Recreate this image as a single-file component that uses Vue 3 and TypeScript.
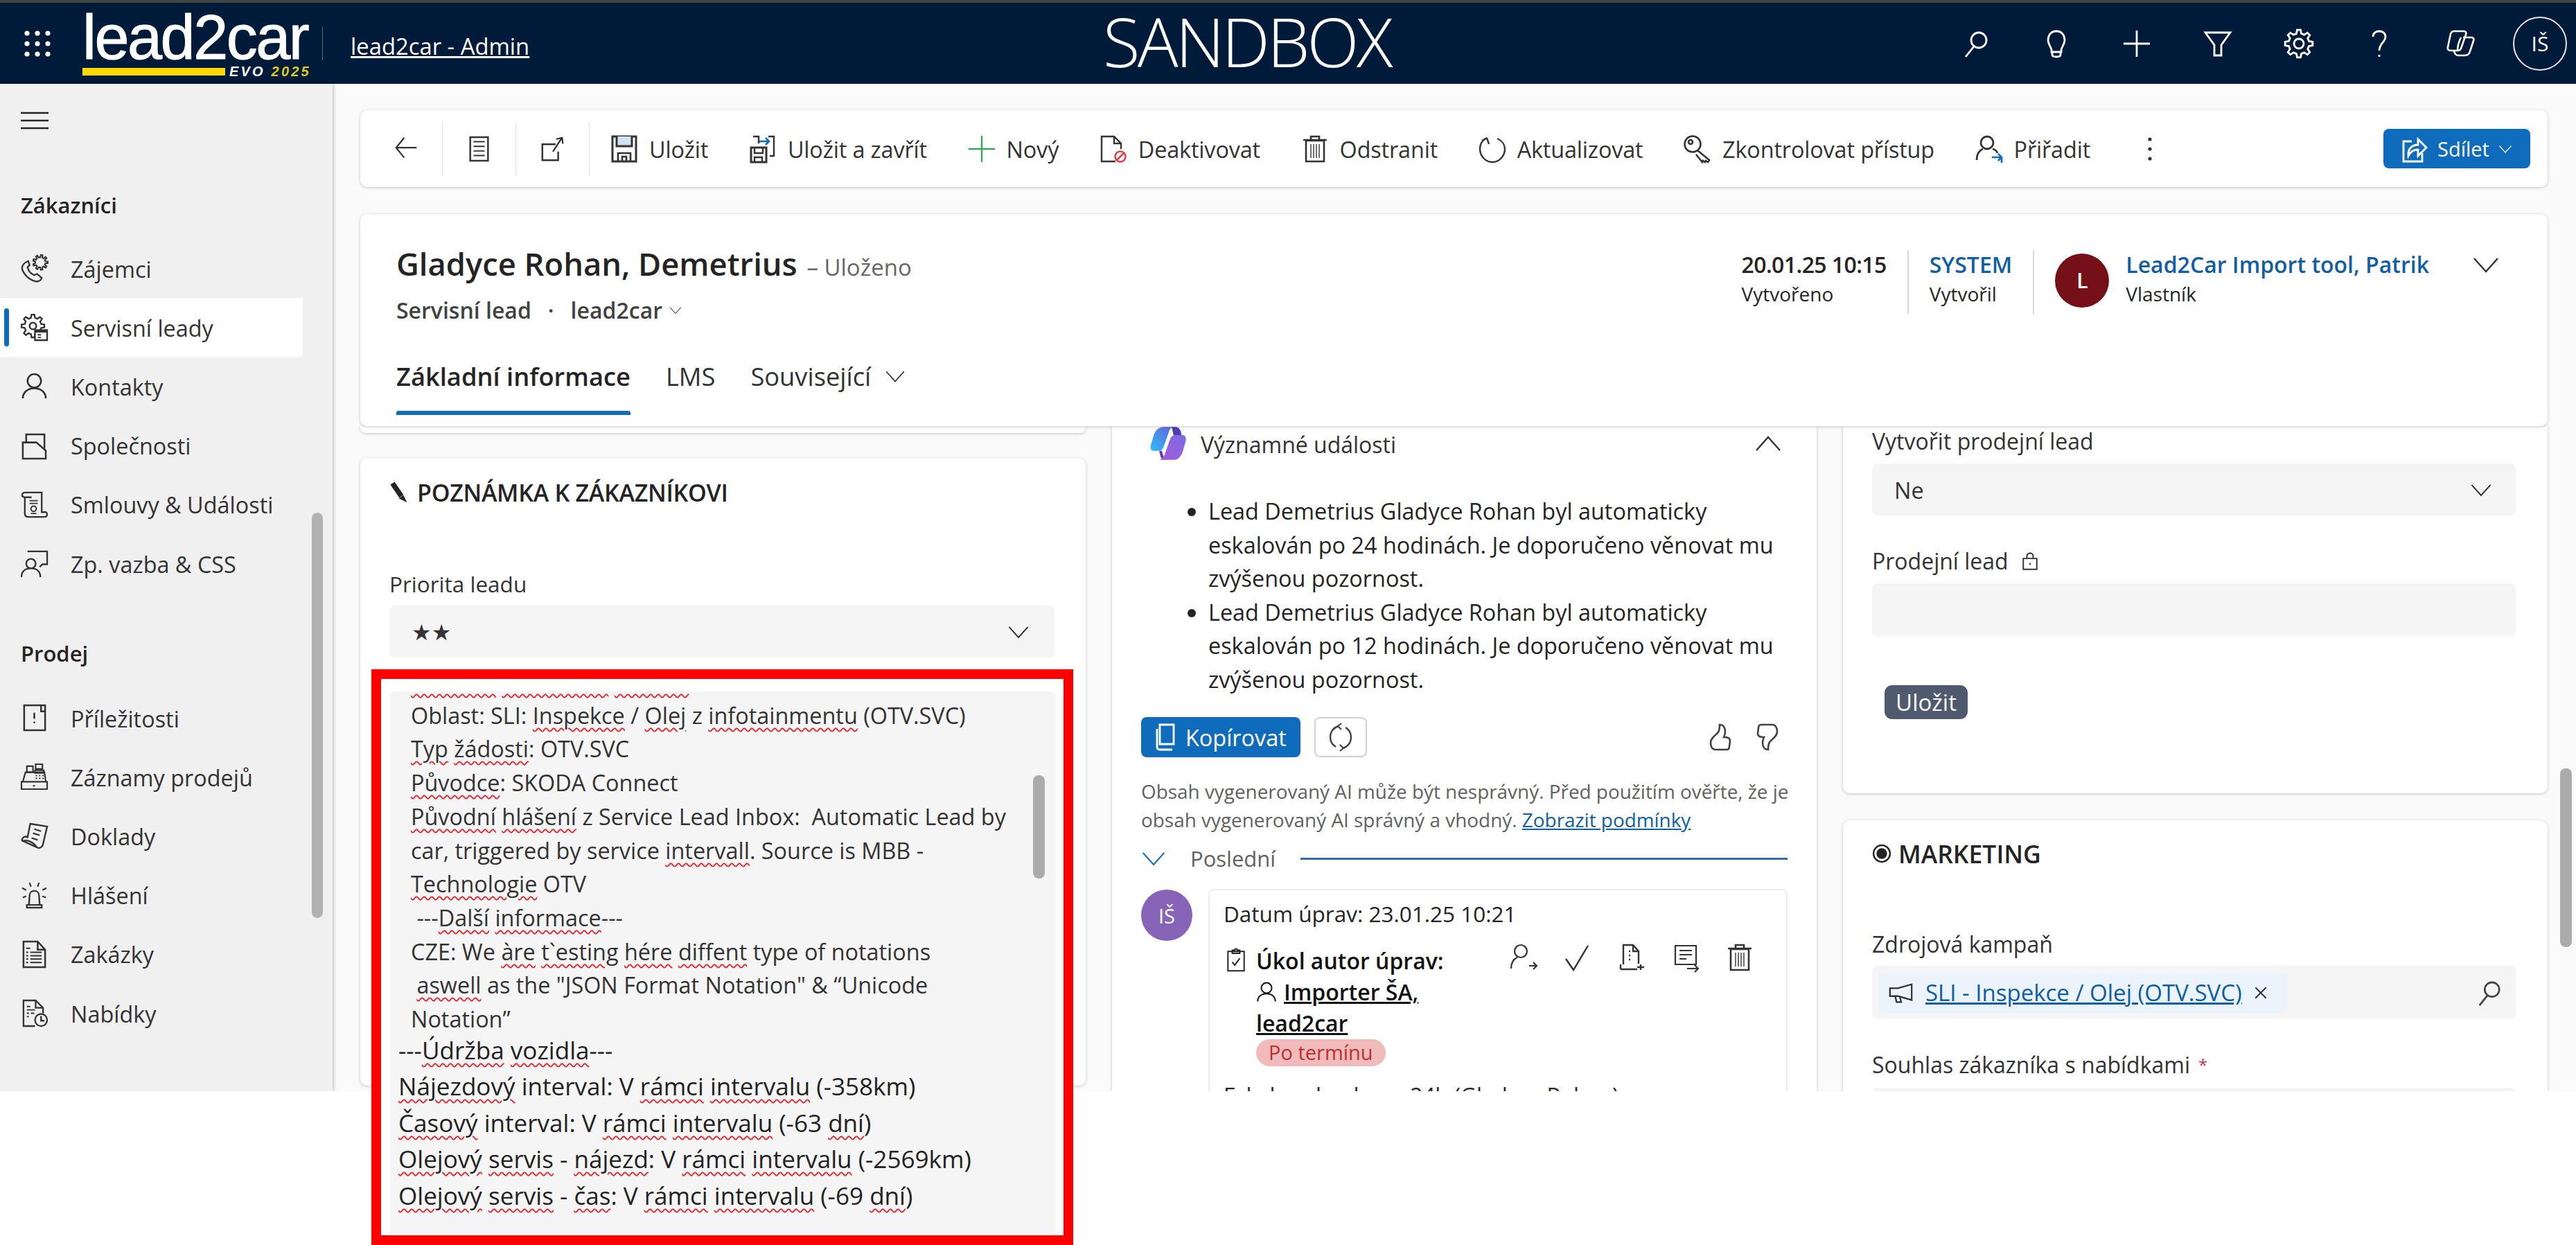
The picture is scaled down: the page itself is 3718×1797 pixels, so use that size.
<template>
  <div class="page">
    <div class="shell">
      <header class="topbar">
        <div class="topbar__left">
          <span class="topbar__waffle"><Ico name="waffle" :size="40" /></span>
          <div class="logo">
            <span class="logo__word">lead2car</span>
            <span class="logo__sub">
              <span class="logo__bar"></span>
              <span class="logo__evo">EVO <b>2025</b></span>
            </span>
          </div>
          <span class="topbar__divider"></span>
          <a class="topbar__app">lead2car - Admin</a>
        </div>
        <span class="topbar__env">SANDBOX</span>
        <div class="topbar__actions">
          <span v-for="name in headerIcons" :key="name" class="topbar__icon">
            <Ico :name="name" :size="40" />
          </span>
          <span class="topbar__user">IŠ</span>
        </div>
      </header>

      <div class="body">
        <nav class="side">
          <span class="side__burger"><Ico name="burger" :size="40" /></span>
          <template v-for="group in navGroups" :key="group.title">
            <h2 class="side__title">{{ group.title }}</h2>
            <a
              v-for="item in group.items"
              :key="item.label"
              class="side__item"
              :class="{ 'side__item--active': item.active }"
            >
              <Ico :name="item.icon" :size="39" />
              <span>{{ item.label }}</span>
            </a>
          </template>
          <span class="side__scroll"></span>
        </nav>

        <main class="main">
          <div class="toolbar">
            <span class="toolbar__plain toolbar__plain--back"><Ico name="back" :size="36" /></span>
            <span class="toolbar__sep"></span>
            <span class="toolbar__plain"><Ico name="form" :size="38" /></span>
            <span class="toolbar__sep"></span>
            <span class="toolbar__plain"><Ico name="popout" :size="38" /></span>
            <span class="toolbar__sep"></span>
            <button v-for="cmd in commands" :key="cmd.label" class="toolbar__cmd">
              <Ico :name="cmd.icon" :size="40" />
              <span>{{ cmd.label }}</span>
            </button>
            <span class="toolbar__more"><Ico name="dots" :size="40" /></span>
            <button class="share">
              <Ico name="share" :size="40" />
              <span>Sdílet</span>
              <Ico name="chevron" :size="20" />
            </button>
          </div>

          <section class="record">
            <div class="record__top">
              <div>
                <h1 class="record__title">
                  Gladyce Rohan, Demetrius <small>– Uloženo</small>
                </h1>
                <p class="record__type">
                  Servisní lead <i>·</i> lead2car
                  <Ico name="chevron" :size="18" />
                </p>
              </div>
              <div class="record__meta">
                <div class="meta meta--date">
                  <strong>20.01.25 10:15</strong>
                  <span>Vytvořeno</span>
                </div>
                <div class="meta meta--by">
                  <strong class="link">SYSTEM</strong>
                  <span>Vytvořil</span>
                </div>
                <div class="meta meta--owner">
                  <span class="meta__avatar">L</span>
                  <div class="meta__owner-text">
                    <strong class="link">Lead2Car Import tool, Patrik</strong>
                    <span>Vlastník</span>
                  </div>
                </div>
                <span class="record__expand"><Ico name="chevron" :size="40" /></span>
              </div>
            </div>
            <div class="tabs">
              <span class="tabs__tab tabs__tab--active">Základní informace</span>
              <span class="tabs__tab">LMS</span>
              <span class="tabs__tab">Související <Ico name="chevron" :size="30" /></span>
            </div>
          </section>

          <div class="columns">
            <div class="col">
              <div class="card card--stub"></div>
              <section class="card card--note">
                <h3 class="heading"><Ico name="pencil" :size="30" /> POZNÁMKA K ZÁKAZNÍKOVI</h3>
                <label class="label label--priority">Priorita leadu</label>
                <div class="field field--stars">
                  <span>★★</span>
                  <Ico name="chevron" :size="32" />
                </div>
              </section>
            </div>

            <div class="col">
              <section class="card card--timeline">
                <div class="insight">
                  <Ico name="copilot" :size="52" />
                  <span class="insight__title">Významné události</span>
                  <span class="insight__toggle"><Ico name="chevronUp" :size="40" /></span>
                </div>
                <ul class="insight__list">
                  <li>Lead Demetrius Gladyce Rohan byl automaticky eskalován po 24 hodinách. Je doporučeno věnovat mu zvýšenou pozornost.</li>
                  <li>Lead Demetrius Gladyce Rohan byl automaticky eskalován po 12 hodinách. Je doporučeno věnovat mu zvýšenou pozornost.</li>
                </ul>
                <div class="insight__actions">
                  <button class="copy"><Ico name="copy" :size="40" /> Kopírovat</button>
                  <button class="refresh"><Ico name="cycle" :size="40" /></button>
                  <span class="insight__thumbs">
                    <Ico name="thumbUp" :size="40" />
                    <Ico name="thumbDown" :size="40" />
                  </span>
                </div>
                <p class="insight__note">
                  Obsah vygenerovaný AI může být nesprávný. Před použitím ověřte, že je<br />
                  obsah vygenerovaný AI správný a vhodný. <a>Zobrazit podmínky</a>
                </p>
                <div class="recent">
                  <span class="recent__chevron"><Ico name="chevron" :size="36" /></span>
                  <span class="recent__label">Poslední</span>
                  <span class="recent__line"></span>
                </div>
                <div class="activity">
                  <span class="activity__avatar">IŠ</span>
                  <div class="activity__card">
                    <p class="activity__date">Datum úprav: 23.01.25 10:21</p>
                    <div class="task">
                      <span class="task__clip"><Ico name="clipboard" :size="36" /></span>
                      <div class="task__body">
                        <strong>Úkol autor úprav:</strong>
                        <a class="task__who"><Ico name="person" :size="30" /><u>Importer ŠA,</u></a>
                        <u class="task__org">lead2car</u>
                        <span class="task__badge">Po termínu</span>
                      </div>
                      <div class="task__tools">
                        <Ico v-for="t in taskTools" :key="t" :name="t" :size="40" />
                      </div>
                    </div>
                    <p class="activity__text">Eskalace leadu po 24h (Gladyce Rohan)</p>
                  </div>
                </div>
              </section>
            </div>

            <div class="col">
              <section class="card card--sale">
                <label class="label">Vytvořit prodejní lead</label>
                <div class="field field--select">
                  <span>Ne</span>
                  <Ico name="chevron" :size="32" />
                </div>
                <label class="label label--next">Prodejní lead <Ico name="lock" :size="26" /></label>
                <div class="field field--empty"></div>
                <button class="save">Uložit</button>
              </section>
              <section class="card card--marketing">
                <h3 class="heading heading--marketing"><Ico name="radio" :size="28" /> MARKETING</h3>
                <label class="label label--campaign">Zdrojová kampaň</label>
                <div class="field field--lookup">
                  <span class="chip">
                    <Ico name="megaphone" :size="38" />
                    <a>SLI - Inspekce / Olej (OTV.SVC)</a>
                    <Ico name="close" :size="22" />
                  </span>
                  <span class="field__search"><Ico name="search" :size="38" /></span>
                </div>
                <label class="label label--next">Souhlas zákazníka s nabídkami <sup>*</sup></label>
                <div class="field field--consent"></div>
              </section>
            </div>
          </div>

          <span class="main__scroll"></span>
        </main>
      </div>
    </div>

    <!-- red highlight from the screenshot, it sits over the form and past the window -->
    <div class="callout">
      <div class="callout__note">
        <div class="callout__upper">
          <p v-for="(line, i) in upperLines" :key="i" class="noteline">
            <template v-for="(seg, j) in segments(line)" :key="j">
              <span v-if="seg.typo" class="typo">{{ seg.text }}</span>
              <template v-else>{{ seg.text }}</template>
            </template>
          </p>
        </div>
        <div class="callout__lower">
          <p v-for="(line, i) in lowerLines" :key="i" class="noteline">
            <template v-for="(seg, j) in segments(line)" :key="j">
              <span v-if="seg.typo" class="typo">{{ seg.text }}</span>
              <template v-else>{{ seg.text }}</template>
            </template>
          </p>
        </div>
        <span class="callout__scroll"></span>
      </div>
    </div>
  </div>
</template>

<script setup lang="ts">
import { h } from "vue";
import type { FunctionalComponent } from "vue";

interface IconPart {
  d: string;
  stroke?: string;
  fill?: string;
  width?: number;
}

const circle = (cx: number, cy: number, r: number) =>
  `M${cx - r} ${cy}a${r} ${r} 0 1 0 ${2 * r} 0a${r} ${r} 0 1 0 ${-2 * r} 0z`;

// toothed outline, used for the gear and the little burst icons
function gear(cx: number, cy: number, outer: number, inner: number, teeth: number) {
  const step = (Math.PI * 2) / teeth;
  const pts: string[] = [];
  for (let i = 0; i < teeth; i++) {
    const a = i * step;
    [
      [a - step * 0.3, inner],
      [a - step * 0.16, outer],
      [a + step * 0.16, outer],
      [a + step * 0.3, inner],
    ].forEach(([ang, rad]) => {
      pts.push(`${(cx + rad * Math.cos(ang)).toFixed(2)} ${(cy + rad * Math.sin(ang)).toFixed(2)}`);
    });
  }
  return "M" + pts.join("L") + "z";
}

const icons: Record<string, IconPart[]> = {
  waffle: [
    {
      d: [5, 20, 35]
        .flatMap((y) => [5, 20, 35].map((x) => circle(x, y, 3.6)))
        .join(""),
      fill: "currentColor",
      stroke: "none",
    },
  ],
  burger: [{ d: "M0 2h40M0 13h40M0 24h40", width: 2.4 }],
  search: [{ d: circle(25, 15, 11) + "M18 24L6 39" }],
  bulb: [
    { d: "M20 2C12 2 8 8 8 15c0 6 4 9 5 14v3h14v-3c1-5 5-8 5-14 0-7-4-13-12-13zM14 32v4c0 2 2 3 6 3s6-1 6-3v-4" },
  ],
  plus: [{ d: "M20 1v38M1 20h38" }],
  funnel: [{ d: "M2 4h36L25 22v15H15V22z" }],
  gear: [{ d: gear(20, 20, 20, 15, 8) + circle(20, 20, 7) }],
  help: [{ d: "M11 10c0-5 4-8 9-8s9 3 9 8-4 8-6 11-3 5-3 9M20 36v3" }],
  apps: [
    { d: "M11 2h14c3 0 4 2 3 5L21 27c-1 2-3 3-5 3H6c-3 0-5-2-4-5L6 6c1-3 3-4 5-4z", width: 2.6 },
    { d: "M24 11h12c3 0 4 2 3 5l-5 15c-1 4-3 6-7 6H17c-3 0-5-2-6-6M21 11c-3 6-5 12-5 19", width: 2.6 },
  ],
  back: [{ d: "M36 18H3M16 2L3 18l13 16", width: 2.4 }],
  form: [
    { d: "M6 2h27v36H6z", width: 2.6 },
    { d: "M11 9h17M11 16h17M11 23h17M11 30h17", width: 2 },
  ],
  popout: [
    { d: "M24 13H4v24h24V24", width: 2.6 },
    { d: "M20 24L33 4M25 5l9-2 1 9", width: 2.4 },
  ],
  save: [
    { d: "M3 2h34v36H3z", width: 3 },
    { d: "M9 2v14h22V2", fill: "#cfe3f4", width: 3 },
    { d: "M11 38V26h18v12M17 38v-7h6v7", width: 2.6 },
  ],
  saveClose: [
    { d: "M3 18h22v21H3z", width: 3 },
    { d: "M8 18v8h12v-8M8 39v-7h11v7", width: 2.4 },
    { d: "M14 12V2H6M28 2h8v28h-6", width: 2.4 },
    { d: "M15 9h14M24 4l5 5-5 5", stroke: "#0f6cbd", width: 2.6 },
  ],
  newItem: [{ d: "M20 1v38M1 20h38", stroke: "#3aa35c", width: 2.4 }],
  deactivate: [
    { d: "M23 38H3V2h18l10 10v8M21 2v10h10", width: 2.4 },
    { d: circle(30, 31, 7.5) + "M25 36l10-10", stroke: "#e0424c", width: 2.6 },
  ],
  trash: [
    { d: "M7 8h26v30H7zM3 7h34M14 7V2h12v5", width: 2.6 },
    { d: "M14 13v20M18 13v20M22 13v20M26 13v20", width: 1.4 },
  ],
  refresh: [{ d: "M27 5c7 3 11 9 11 15 0 10-8 19-18 19S2 30 2 20C2 13 6 7 12 4M12 4l3 9M12 4L5 8", width: 2.4 }],
  cycle: [
    { d: "M17 4C10 6 5 12 5 20c0 6 3 11 8 14M23 36c7-2 12-8 12-16 0-6-3-11-8-14", width: 2.4 },
    { d: "M21 0l-5 4 5 5M19 40l5-4-5-5", width: 2.2 },
  ],
  key: [
    { d: circle(13, 13, 11.5) + "M7 10a3 3 0 1 0 6 0a3 3 0 1 0-6 0zM20 22l17 14-2 3-3-2-1 2-3-2-1 2-9-11", width: 2.6 },
  ],
  assign: [
    { d: circle(17, 11, 9) + "M2 36c0-10 4-14 9-16M32 26c-1-3-3-5-7-6" },
    { d: "M24 32h14M33 27l5 5-5 5M38 32v8", stroke: "#0f6cbd", width: 2.6 },
  ],
  dots: [
    {
      d: circle(20, 6, 2.6) + circle(20, 20, 2.6) + circle(20, 34, 2.6),
      fill: "currentColor",
      stroke: "none",
    },
  ],
  share: [
    { d: "M16 9H4v29h27V26", width: 2.8 },
    { d: "M11 30c-1-10 5-16 14-16V6l12 12-12 12v-9c-6 0-11 3-14 9z", width: 2.8 },
  ],
  chevron: [{ d: "M3 11l17 19 17-19", width: 2.4 }],
  chevronUp: [{ d: "M3 29L20 10l17 19", width: 2.4 }],
  phoneStar: [
    { d: "M11 9C4 12 1 16 2 21c3 9 11 16 20 18 5 1 8-2 9-5l-7-6-4 2c-5-2-9-7-10-12l3-3z", width: 2.4 },
    { d: gear(29, 11, 11, 7.5, 9), width: 2.2 },
  ],
  gearDoc: [
    { d: gear(18, 18, 17, 12.5, 8) + circle(18, 18, 5), width: 2.4 },
    { d: "M21 24h18v15H21z", fill: "#fff", width: 2.4 },
    { d: "M21 26h18", width: 3.4 },
    { d: "M25 31h5M25 35h5", width: 2 },
  ],
  person: [{ d: circle(20, 12, 10) + "M3 38c0-9 7-15 17-15s17 6 17 15", width: 2.6 }],
  company: [
    { d: "M3 39V15h20l14 12v12z", width: 2.6 },
    { d: "M8 15V3h27v24", width: 2.6 },
  ],
  contract: [
    { d: "M6 9v24c0 3 2 5 5 5h24c3 0 4-2 4-4s-2-4-4-3h-4V2H6C3 2 2 4 2 6s2 3 4 3h10", width: 2.4 },
    { d: "M13 14h12M13 18h12M15 33h8", width: 1.8 },
    { d: circle(19, 26, 4), width: 2 },
  ],
  feedback: [
    { d: circle(15, 20, 7) + "M1 40c0-9 6-13 14-13s14 4 14 13", width: 2.4 },
    { d: "M10 2h29v19h-7l-4 4", width: 2.4 },
  ],
  opportunity: [
    { d: "M5 1h31v37H5zM30 1v9h6", width: 2.6 },
    { d: "M20 12v9M20 25v2.5", width: 2.6 },
  ],
  register: [
    { d: "M1 27h38v11H1zM3 27l4-14h28l2 14", width: 2.2 },
    { d: "M9 4h9v9H9zM22 1h10v7H22zM21 10h13v4H21z", width: 2.2 },
    { d: "M22 18h2M27 18h2M32 18h2M22 22h2M27 22h2M32 22h2M18 33h3", width: 2 },
  ],
  receipt: [
    { d: "M14 1l25 4-6 26c-1 5-6 7-9 5L2 26c-1-3 2-6 6-6l2 1zM2 27c6-3 16 0 22 9", width: 2.4 },
    { d: "M20 9l10 3M18 15l10 3M16 22l9 3", width: 2.2 },
  ],
  alarm: [
    { d: "M9 38h22v-4H9zM12 34l1-14c0-9 14-9 14 0l1 14", width: 2.4 },
    { d: "M13 1l2 6M27 1l-2 6M2 9l6 3M38 9l-6 3M3 23l5-2M37 23l-5-2", width: 2.2 },
  ],
  doc: [
    { d: "M4 1h21l11 12v26H4zM25 1v12h11", width: 2.6 },
    { d: "M8 11h6M8 17h3M14 17h17M8 22h3M14 22h17M8 27h3M14 27h17M8 32h3M14 32h17", width: 2 },
  ],
  docClock: [
    { d: "M21 39H4V1h18l11 11v8M22 1v11h11", width: 2.4 },
    { d: "M9 10h5M9 15h12M9 20h3M15 20h5M9 25h3", width: 2 },
    { d: circle(30, 30, 9) + "M30 24v7h5", width: 2.4 },
  ],
  pencil: [
    { d: "M6 2l17 25", width: 10 },
    { d: "M18 31l9-6 7 14z", fill: "currentColor", stroke: "none" },
  ],
  copilot: [
    {
      d: "M15 1C9 1 6 5 4 10L.5 22C0 25 1 27.5 4 27.5h5c3 0 5-1.5 6-4.5L21 6c1-3 3-5 6-5z",
      fill: "url(#cop-a)",
      stroke: "none",
    },
    { d: "M24 1h4c3 0 5 2 6 5l1 4h-9z", fill: "#4c3fb4", stroke: "none" },
    { d: "M10 27.5l1.5 6c.7 2.5 2.5 4 4.5 4l-3-10z", fill: "#6a36b8", stroke: "none" },
    {
      d: "M36 10h-8c-3 0-5 2-6 5L16 32c-1 3-3 5-6 5.5h16c5 0 8-3.500 10-8.500l3.500-12c1-4-.5-7-3.500-7z",
      fill: "url(#cop-b)",
      stroke: "none",
    },
  ],
  copy: [
    { d: "M11 2h20v28H11z", width: 2.8 },
    { d: "M7 8v26c0 3 2 4 4 4h18", width: 2.8 },
  ],
  thumbUp: [
    { d: "M17 38H9c-4-1-6-5-6-10 0-6 5-9 10-14 3-3 3-8 3-12 5 0 8 4 8 10 0 4-1 6-2 8 6 0 9 1 9 6l-1 7c0 3-1 5-4 5-3 0-6 0-9 0z", width: 2.6 },
  ],
  thumbDown: [
    { d: "M23 2h8c4 1 6 5 6 10 0 6-5 9-10 14-3 3-3 8-3 12-5 0-8-4-8-10 0-4 1-6 2-8-6 0-9-1-9-6l1-7c0-3 1-5 4-5 3 0 6 0 9 0z", width: 2.6 },
  ],
  clipboard: [
    { d: "M7 7h26v31H7zM14 7V5h4c0-3 4-3 4 0h4v5H14z", width: 2.2 },
    { d: "M14 24l4 5 8-11", width: 2.2 },
  ],
  assignTo: [{ d: circle(16, 11, 9) + "M2 36c0-10 4-14 9-16M28 32h11M34 27l5 5-5 5", width: 2.2 }],
  check: [{ d: "M3 22l11 16L35 3", width: 2.4 }],
  docPlus: [
    { d: "M8 30V2h14l8 9v18M22 2v9h8M4 37h24M4 30v7M33 30v8M28 34h10M16 11h2M16 17h2M16 23h2", width: 2.4 },
  ],
  noteMove: [
    { d: "M5 3h30v27H5zM11 10h18M11 16h18M11 22h10M22 36h16M33 31l5 5-5 5", width: 2.2 },
  ],
  lock: [
    { d: "M5 14h30v24H5zM13 14V9c0-9 14-9 14 0v5M20 24v4", width: 3 },
  ],
  radio: [
    { d: circle(20, 20, 17), width: 3.5 },
    { d: circle(20, 20, 11), fill: "currentColor", stroke: "none" },
  ],
  megaphone: [
    { d: "M36 7v24L15 25H3V13h12zM11 25l2 9h7l-2-8", width: 2.4 },
  ],
  close: [{ d: "M6 6l28 28M34 6L6 34", width: 3.6 }],
};

const Ico: FunctionalComponent<{ name: string; size?: number }> = (props) =>
  h(
    "svg",
    {
      width: props.size ?? 40,
      height: props.size ?? 40,
      viewBox: "0 0 40 40",
      fill: "none",
      stroke: "currentColor",
      "stroke-width": 2.8,
      overflow: "visible",
    },
    [
      props.name === "copilot"
        ? h("defs", [
            h("linearGradient", { id: "cop-a", x1: "0", y1: "1", x2: "1", y2: "0" }, [
              h("stop", { offset: "0", "stop-color": "#2cc0f5" }),
              h("stop", { offset: "0.5", "stop-color": "#4a8ee8" }),
              h("stop", { offset: "1", "stop-color": "#6c5fe0" }),
            ]),
            h("linearGradient", { id: "cop-b", x1: "1", y1: "0", x2: "0", y2: "1" }, [
              h("stop", { offset: "0", "stop-color": "#7d6ce6" }),
              h("stop", { offset: "1", "stop-color": "#a45ad6" }),
            ]),
          ])
        : null,
      ...(icons[props.name] ?? []).map((p) =>
        h("path", {
          d: p.d,
          stroke: p.stroke,
          fill: p.fill,
          "stroke-width": p.width,
        })
      ),
    ]
  );
Ico.props = ["name", "size"];

const headerIcons = ["search", "bulb", "plus", "funnel", "gear", "help", "apps"];

const navGroups = [
  {
    title: "Zákazníci",
    items: [
      { label: "Zájemci", icon: "phoneStar" },
      { label: "Servisní leady", icon: "gearDoc", active: true },
      { label: "Kontakty", icon: "person" },
      { label: "Společnosti", icon: "company" },
      { label: "Smlouvy & Události", icon: "contract" },
      { label: "Zp. vazba & CSS", icon: "feedback" },
    ],
  },
  {
    title: "Prodej",
    items: [
      { label: "Příležitosti", icon: "opportunity" },
      { label: "Záznamy prodejů", icon: "register" },
      { label: "Doklady", icon: "receipt" },
      { label: "Hlášení", icon: "alarm" },
      { label: "Zakázky", icon: "doc" },
      { label: "Nabídky", icon: "docClock" },
    ],
  },
];

const commands = [
  { label: "Uložit", icon: "save" },
  { label: "Uložit a zavřít", icon: "saveClose" },
  { label: "Nový", icon: "newItem" },
  { label: "Deaktivovat", icon: "deactivate" },
  { label: "Odstranit", icon: "trash" },
  { label: "Aktualizovat", icon: "refresh" },
  { label: "Zkontrolovat přístup", icon: "key" },
  { label: "Přiřadit", icon: "assign" },
];

const taskTools = ["assignTo", "check", "docPlus", "noteMove", "trash"];

// {word} = word with the browser's spellcheck squiggle
const upperLines = [
  "{Původní} {servisního} {žádosti}",
  "Oblast: SLI: {Inspekce} / {Olej} z {infotainmentu} (OTV.SVC)",
  "{Typ} {žádosti}: OTV.SVC",
  "{Původce}: SKODA Connect",
  "{Původní} {hlášení} z Service Lead Inbox:  Automatic Lead by",
  "car, triggered by service {intervall}. Source is MBB -",
  "{Technologie} OTV",
  " ---{Další} {informace}---",
  "CZE: We {àre} {t`esting} {hére} {diffent} type of notations",
  " {aswell} as the \"JSON Format Notation\" & “Unicode",
  "Notation”",
];

const lowerLines = [
  "---{Údržba} {vozidla}---",
  "{Nájezdový} interval: V {rámci} {intervalu} (-358km)",
  "{Časový} interval: V {rámci} {intervalu} (-63 {dní})",
  "{Olejový} {servis} - {nájezd}: V {rámci} {intervalu} (-2569km)",
  "{Olejový} {servis} - {čas}: V {rámci} {intervalu} (-69 {dní})",
];

function segments(line: string) {
  return line
    .split(/(\{[^}]+\})/)
    .filter(Boolean)
    .map((part) =>
      part.startsWith("{")
        ? { text: part.slice(1, -1), typo: true }
        : { text: part, typo: false }
    );
}
</script>

<style scoped>
.page {
  position: relative;
  width: 3718px;
  height: 1797px;
  overflow: hidden;
  background: #fff;
  color: #242424;
  font-family: "Open Sans", "DejaVu Sans", sans-serif;
  font-size: 32.4px;
}

.shell {
  height: 1575px;
  display: flex;
  flex-direction: column;
  overflow: hidden;
}

svg {
  flex: none;
  display: block;
}

p,
h1,
h2,
h3,
ul {
  margin: 0;
}

button {
  font: inherit;
  border: none;
  background: none;
  color: inherit;
  padding: 0;
}

/* top bar */
.topbar {
  flex: none;
  height: 117px;
  border-top: 4px solid #444;
  background: #001a3a;
  color: #fff;
  display: flex;
  align-items: center;
}

.topbar__left {
  flex: none;
  width: 1592px;
  display: flex;
  align-items: center;
}

.topbar__waffle {
  margin-left: 34px;
  width: 40px;
}

.logo {
  margin-left: 45px;
  width: 334px;
  height: 100px;
  display: flex;
  flex-direction: column;
}

.logo__word {
  font-family: "Liberation Sans", sans-serif;
  font-size: 90px;
  line-height: 82px;
  letter-spacing: -2.5px;
  white-space: nowrap;
  -webkit-text-stroke: 1px #fff;
}

.logo__sub {
  display: flex;
  align-items: center;
  gap: 6px;
  height: 18px;
}

.logo__bar {
  width: 206px;
  height: 11px;
  background: #ffd800;
}

.logo__evo {
  font-family: "Liberation Sans", sans-serif;
  font-size: 20px;
  font-style: italic;
  font-weight: 700;
  letter-spacing: 3.2px;
  white-space: nowrap;
}

.logo__evo b {
  color: #d9c828;
}

.topbar__divider {
  margin-left: 12px;
  width: 1px;
  height: 48px;
  background: #5c6b80;
}

.topbar__app {
  margin-left: 40px;
  font-size: 32.8px;
  text-decoration: underline;
  white-space: nowrap;
  padding-top: 8px;
}

.topbar__env {
  font-size: 98px;
  font-weight: 300;
  line-height: 110px;
  letter-spacing: -3.8px;
  margin-top: -7px;
}

.topbar__actions {
  margin-left: auto;
  margin-right: 13px;
  display: flex;
  align-items: center;
}

.topbar__icon {
  width: 116.6px;
  display: flex;
  justify-content: center;
}

.topbar__user {
  margin-left: 18px;
  width: 78px;
  height: 78px;
  border: 2px solid #e6e6e6;
  border-radius: 50%;
  box-sizing: border-box;
  display: flex;
  align-items: center;
  justify-content: center;
  font-size: 30px;
}

.body {
  flex: 1;
  display: flex;
  min-height: 0;
}

/* sidebar */
.side {
  position: relative;
  flex: none;
  width: 480px;
  box-sizing: border-box;
  background: #f0f0f0;
  box-shadow: 1px 0 5px rgba(0, 0, 0, 0.28);
  z-index: 3;
}

.side__burger {
  display: block;
  margin: 40px 0 0 30px;
  height: 105px;
}

.side__title {
  font-size: 31px;
  font-weight: 600;
  line-height: 60px;
  margin-left: 30px;
  margin-bottom: 19px;
}

.side__item + .side__title {
  margin-top: 57px;
  margin-bottom: 21px;
}

.side__item {
  position: relative;
  width: 437px;
  height: 85.2px;
  display: flex;
  align-items: center;
  gap: 33px;
  padding-left: 30px;
  box-sizing: border-box;
  white-space: nowrap;
  color: #333;
}

.side__item--active {
  background: #fff;
}

.side__item--active::before {
  content: "";
  position: absolute;
  left: 6px;
  top: 15px;
  bottom: 15px;
  width: 7px;
  border-radius: 4px;
  background: #0f6cbd;
}

.side__scroll {
  position: absolute;
  left: 450px;
  top: 619px;
  width: 16px;
  height: 585px;
  border-radius: 8px;
  background: #b2b2b2;
}

/* main */
.main {
  position: relative;
  flex: 1;
  min-width: 0;
  background: #fafafa;
  padding: 38px 41px 0 40px;
  display: flex;
  flex-direction: column;
}

.card,
.toolbar,
.record {
  background: #fff;
  border-radius: 10px;
  box-shadow: 0 1px 4px rgba(0, 0, 0, 0.22);
}

.toolbar {
  flex: none;
  height: 111px;
  display: flex;
  align-items: center;
  padding: 0 25px 0 49px;
  color: #333;
}

.toolbar__plain {
  display: flex;
  margin: 0 33px 0 34px;
}

.toolbar__plain--back {
  margin-left: 0;
}

.toolbar__sep {
  width: 1px;
  height: 78px;
  background: #dcdcdc;
}

.toolbar__cmd {
  display: flex;
  align-items: center;
  gap: 16px;
  margin-left: 30px;
  margin-right: 28.6px;
  white-space: nowrap;
  letter-spacing: -0.15px;
}

.toolbar__more {
  margin-left: 37px;
}

.share {
  margin-left: auto;
  width: 212px;
  height: 57px;
  border-radius: 8px;
  background: #0f6cbd;
  color: #fff;
  display: flex;
  align-items: center;
  padding-left: 25px;
  gap: 13px;
  font-size: 29px;
}

.record {
  flex: none;
  position: relative;
  z-index: 2;
  height: 306px;
  margin-top: 39px;
  padding: 0 50px 0 52px;
  box-sizing: border-box;
  display: flex;
  flex-direction: column;
}

.record__top {
  display: flex;
  justify-content: space-between;
  height: 174px;
}

.record__title {
  margin-top: 42px;
  font-size: 45.3px;
  line-height: 60px;
  font-weight: 600;
  white-space: nowrap;
  color: #242424;
}

.record__title small {
  font-size: 33px;
  font-weight: 400;
  color: #666;
  margin-left: 2px;
}

.record__type {
  margin-top: 10px;
  font-size: 32px;
  font-weight: 600;
  line-height: 44px;
  color: #424242;
  display: flex;
  align-items: center;
  gap: 10px;
}

.record__type i {
  font-style: normal;
  margin: 0 14px;
}

.record__meta {
  display: flex;
  align-items: flex-start;
  margin-top: 52px;
  margin-right: 19px;
}

.meta {
  height: 92px;
  display: flex;
  flex-direction: column;
  font-size: 28px;
  line-height: 42px;
  white-space: nowrap;
}

.meta strong {
  font-size: 32px;
  font-weight: 600;
}

.meta--date strong {
  letter-spacing: -0.6px;
}

.meta--date {
  padding-right: 30px;
  border-right: 2px solid #d8d8d8;
}

.meta--by {
  padding: 0 30px;
  border-right: 2px solid #d8d8d8;
}

.meta--owner {
  flex-direction: row;
  padding-left: 30px;
  gap: 24px;
}

.meta__owner-text {
  display: flex;
  flex-direction: column;
}

.meta__avatar {
  width: 78px;
  height: 78px;
  margin-top: 5px;
  border-radius: 50%;
  background: #751019;
  color: #fff;
  display: flex;
  align-items: center;
  justify-content: center;
  font-size: 30px;
  font-weight: 600;
}

.link {
  color: #115ea3;
}

.record__expand {
  margin-left: 62px;
  color: #333;
  margin-top: 1px;
}

.tabs {
  margin-top: 25px;
  display: flex;
  gap: 51px;
  font-size: 36.3px;
  color: #333;
}

.tabs__tab {
  display: flex;
  align-items: center;
  gap: 20px;
  height: 70px;
  white-space: nowrap;
  position: relative;
}

.tabs__tab--active {
  font-weight: 600;
  color: #242424;
}

.tabs__tab--active::after {
  content: "";
  position: absolute;
  left: 0;
  right: 0;
  bottom: -21px;
  height: 6px;
  border-radius: 3px 3px 0 0;
  background: #0f6cbd;
}

.columns {
  flex: 1;
  min-height: 0;
  display: grid;
  grid-template-columns: 1047px 1017px 1017px;
  gap: 38px;
}

.col {
  display: flex;
  flex-direction: column;
  min-height: 0;
}

.card--stub {
  height: 10px;
  border-radius: 0 0 8px 8px;
  margin-bottom: 36px;
  flex: none;
}

.card--note {
  height: 906px;
  padding: 0 45px 0 42px;
  box-sizing: border-box;
}

.heading {
  display: flex;
  align-items: center;
  gap: 10px;
  font-size: 34.1px;
  font-weight: 600;
  line-height: 40px;
  padding-top: 30px;
  white-space: nowrap;
  letter-spacing: -0.3px;
}

.label {
  display: flex;
  align-items: center;
  gap: 18px;
  font-size: 32px;
  line-height: 44px;
  white-space: nowrap;
  color: #333;
}

.label--priority {
  margin-top: 90px;
  font-size: 31.5px;
}

.label sup {
  color: #c4314b;
  font-size: 24px;
  line-height: 0;
  margin-left: -6px;
}

.field {
  background: #f5f5f5;
  border-radius: 8px;
  display: flex;
  align-items: center;
  justify-content: space-between;
  color: #333;
}

.field--stars {
  height: 75px;
  margin-top: 9px;
  padding: 0 36px 0 32px;
  font-size: 32px;
}

.card--timeline {
  flex: 1;
  padding: 0 42px;
  border-radius: 0;
}

.insight {
  display: flex;
  align-items: center;
  height: 52px;
  padding-left: 13px;
  gap: 21px;
  font-size: 32px;
  color: #333;
}

.insight__toggle {
  margin-left: auto;
  margin-right: 8px;
}

.insight__list {
  margin-top: 46px;
  padding-left: 97px;
  line-height: 48.5px;
}

.insight__actions {
  margin-top: 31px;
  display: flex;
  align-items: center;
  gap: 20px;
}

.copy {
  width: 230px;
  height: 58px;
  border-radius: 8px;
  background: #0f6cbd;
  color: #fff;
  display: flex;
  align-items: center;
  padding-left: 16px;
  gap: 8px;
  white-space: nowrap;
}

.refresh {
  width: 76px;
  height: 58px;
  border: 2px solid #d1d1d1;
  border-radius: 8px;
  box-sizing: border-box;
  display: flex;
  align-items: center;
  justify-content: center;
  color: #424242;
}

.insight__thumbs {
  margin-left: auto;
  display: flex;
  gap: 22px;
  color: #424242;
  margin-right: 12px;
}

.insight__note {
  margin-top: 29px;
  font-size: 27.9px;
  line-height: 41px;
  color: #616161;
  white-space: nowrap;
}

.insight__note a {
  color: #115ea3;
  text-decoration: underline;
}

.recent {
  margin-top: 15px;
  height: 40px;
  display: flex;
  align-items: center;
  color: #616161;
  font-size: 31px;
}

.recent__chevron {
  color: #0f6cbd;
  width: 71px;
}

.recent__line {
  flex: 1;
  height: 3px;
  margin-left: 36px;
  background: #2f6fb0;
}

.activity {
  margin-top: 25px;
  display: flex;
  align-items: flex-start;
  gap: 23px;
}

.activity__avatar {
  flex: none;
  width: 74px;
  height: 74px;
  border-radius: 50%;
  background: #8764b8;
  color: #fff;
  display: flex;
  align-items: center;
  justify-content: center;
  font-size: 29px;
}

.activity__card {
  flex: 1;
  min-width: 0;
  margin-top: -1px;
  border: 2px solid #ececec;
  border-bottom: none;
  border-radius: 8px 8px 0 0;
  padding: 12px 20px 0;
  font-size: 31.5px;
  line-height: 44px;
}

.task {
  margin-top: 23px;
  display: flex;
  align-items: flex-start;
  gap: 11px;
  font-size: 32px;
  line-height: 45px;
}

.task__clip {
  margin-top: 3px;
}

.task__body {
  width: 355px;
  display: flex;
  flex-direction: column;
  align-items: flex-start;
  white-space: nowrap;
}

.task__body strong {
  font-weight: 600;
  color: #111;
}

.task__who {
  display: flex;
  align-items: center;
  gap: 10px;
  font-weight: 600;
  color: #111;
}

.task__org {
  font-weight: 600;
  color: #111;
}

.task__badge {
  margin-top: 1px;
  height: 39px;
  padding: 0 18px;
  border-radius: 20px;
  background: #f1bbbc;
  color: #bc2f32;
  font-size: 29px;
  line-height: 38px;
}

.task__tools {
  display: flex;
  gap: 38px;
  margin-top: -2px;
  color: #333;
}

.activity__text {
  margin-top: 19px;
  white-space: nowrap;
}

.card--sale {
  flex: none;
  height: 530px;
  padding: 0 46px 0 42px;
  box-sizing: border-box;
  border-radius: 0 0 10px 10px;
}

.field--select {
  height: 75px;
  margin-top: 10px;
  padding: 0 34px 0 32px;
}

.label--next {
  margin-top: 44px;
}

.field--empty {
  height: 77px;
  margin-top: 10px;
}

.save {
  display: block;
  margin: 70px 0 0 18px;
  width: 120px;
  height: 49px;
  border-radius: 11px;
  background: #4f5a6e;
  color: #fff;
  font-size: 33px;
  line-height: 46px;
}

.card--marketing {
  flex: 1;
  margin-top: 39px;
  padding: 0 46px 0 42px;
  border-radius: 10px 10px 0 0;
}

.heading--marketing {
  padding-top: 28px;
  font-size: 35.5px;
  letter-spacing: 0;
}

.label--campaign {
  margin-top: 89px;
}

.field--lookup {
  height: 77px;
  margin-top: 9px;
  padding: 0 20px 0 9px;
}

.chip {
  width: 590px;
  height: 58px;
  box-sizing: border-box;
  padding-left: 14px;
  border-radius: 6px;
  background: #ebf3fc;
  display: flex;
  align-items: center;
  gap: 16px;
  color: #333;
  white-space: nowrap;
  font-size: 33px;
}

.chip a {
  color: #115ea3;
  text-decoration: underline;
}

.field__search {
  color: #424242;
}

.field--consent {
  height: 77px;
  margin-top: 11px;
}

.main__scroll {
  position: absolute;
  left: 3215px;
  top: 988px;
  width: 17px;
  height: 258px;
  border-radius: 8px;
  background: #ababab;
}

/* red annotation and the note pasted inside it */
.callout {
  position: absolute;
  left: 536px;
  top: 966px;
  width: 1013px;
  height: 831px;
  box-sizing: border-box;
  border: 14px solid #f00;
  background: #fff;
  padding: 18px 11px 0 13px;
}

.callout__note {
  position: relative;
  height: 100%;
  background: #f5f5f5;
  border-radius: 8px 8px 0 0;
  overflow: hidden;
  color: #333;
}

.callout__upper {
  margin-top: -39px;
  padding-left: 30px;
  line-height: 48.7px;
}

.callout__lower {
  margin-top: -6px;
  padding-left: 12px;
  font-size: 35.1px;
  line-height: 52.5px;
  color: #222;
}

.noteline {
  white-space: pre;
}

.typo {
  text-decoration: underline wavy #e8252f 2px;
  text-underline-offset: 5px;
}

.callout__scroll {
  position: absolute;
  left: 928px;
  top: 121px;
  width: 17px;
  height: 149px;
  border-radius: 8px;
  background: #ababab;
}
</style>

<style>
html,
body {
  margin: 0;
  background: #fff;
}
</style>
